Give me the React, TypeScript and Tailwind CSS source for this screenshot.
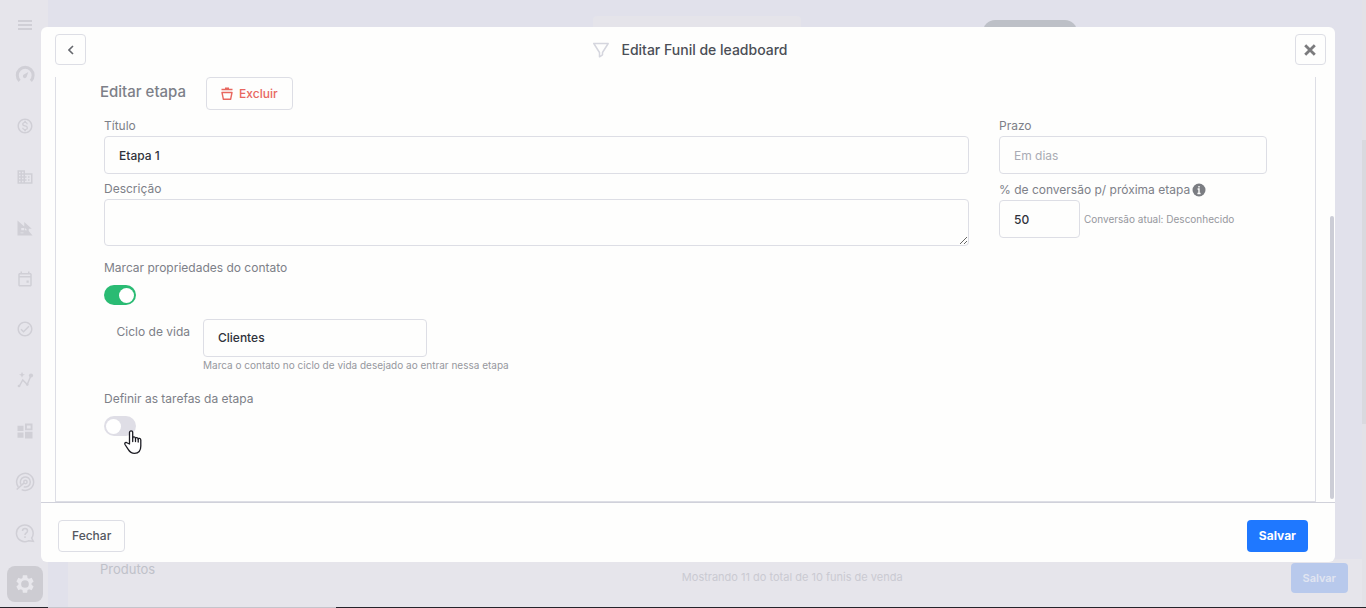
import React, { useState } from 'react';

interface ToggleProps {
    id: string;
    checked: boolean;
    onChange: (value: boolean) => void;
}

const Toggle: React.FC<ToggleProps> = ({ id, checked, onChange }) => (
    <input
        id={id}
        type="checkbox"
        role="switch"
        checked={checked}
        onChange={(e) => onChange(e.target.checked)}
        className="block h-5 w-8 cursor-pointer appearance-none rounded-full bg-[#dfdee6] px-0.5 py-[3px] before:block before:size-[15px] before:rounded-full before:bg-white checked:bg-[#2abb73] checked:before:translate-x-[13px]"
    />
);

const navItems: { name: string; size: string; icon: React.ReactNode }[] = [
    {
        name: 'Painel',
        size: 'size-5',
        icon: (
            <>
                <path d="M5.5 19a9.5 9.5 0 1 1 13.5 0" stroke="currentColor" strokeWidth="3.6" fill="none" />
                <path d="M16 8.5 14 14a2.3 2.3 0 1 1-3.3-2.6z" />
            </>
        ),
    },
    {
        name: 'Vendas',
        size: 'size-[18px]',
        icon: (
            <path d="M12 2C6.48 2 2 6.48 2 12s4.48 10 10 10 10-4.48 10-10S17.52 2 12 2zm0 18c-4.41 0-8-3.59-8-8s3.59-8 8-8 8 3.59 8 8-3.59 8-8 8zm.31-8.86c-1.77-.45-2.34-.94-2.34-1.67 0-.84.79-1.43 2.1-1.43 1.38 0 1.9.66 1.94 1.64h1.71c-.05-1.34-.87-2.57-2.49-2.97V5H10.9v1.69c-1.51.32-2.72 1.3-2.72 2.81 0 1.79 1.49 2.69 3.66 3.21 1.95.46 2.34 1.15 2.34 1.87 0 .53-.39 1.39-2.1 1.39-1.6 0-2.23-.72-2.32-1.64H8.04c.1 1.7 1.36 2.66 2.86 2.97V19h2.34v-1.67c1.52-.29 2.72-1.16 2.73-2.77-.01-2.2-1.9-2.96-3.66-3.42z" />
        ),
    },
    {
        name: 'Empresas',
        size: 'size-[18px]',
        icon: (
            <path d="M12 7V3H2v18h20V7H12zM6 19H4v-2h2v2zm0-4H4v-2h2v2zm0-4H4V9h2v2zm0-4H4V5h2v2zm4 12H8v-2h2v2zm0-4H8v-2h2v2zm0-4H8V9h2v2zm0-4H8V5h2v2zm10 12h-8v-2h2v-2h-2v-2h2v-2h-2V9h8v10zm-2-8h-2v2h2v-2zm0 4h-2v2h2v-2z" />
        ),
    },
    {
        name: 'Funis',
        size: 'size-[18px]',
        icon: <path d="m2 2 9 8V4l10 9h-4v3l5 6H2zM7 12v3h4v-3zM12 12v3h3zM6 18v1h4v-1z" fillRule="evenodd" />,
    },
    {
        name: 'Agenda',
        size: 'size-[18px]',
        icon: (
            <path d="M19 4h-1V2h-2v2H8V2H6v2H5c-1.11 0-2 .9-2 2v14c0 1.1.89 2 2 2h14c1.1 0 2-.9 2-2V6c0-1.1-.9-2-2-2zm0 16H5V10h14v10zm0-12H5V6h14v2zm-5 6h3v3h-3z" />
        ),
    },
    {
        name: 'Tarefas',
        size: 'size-[18px]',
        icon: (
            <path d="M12 2C6.48 2 2 6.48 2 12s4.48 10 10 10 10-4.48 10-10S17.52 2 12 2zm0 18c-4.41 0-8-3.59-8-8s3.59-8 8-8 8 3.59 8 8-3.59 8-8 8zm4.59-12.42L10 14.17l-2.59-2.58L6 13l4 4 8-8z" />
        ),
    },
    {
        name: 'Análises',
        size: 'size-[18px]',
        icon: (
            <>
                <path d="M4 21 9 12l6 6 5-12" stroke="currentColor" strokeWidth="2" fill="none" />
                <circle cx="20" cy="6" r="2.8" />
                <circle cx="4" cy="20" r="1.8" />
                <circle cx="15" cy="18" r="1.8" />
                <path d="m8 1 1.2 3L12 5 9.2 6 8 9 6.8 6 4 5l2.8-1z" />
            </>
        ),
    },
    {
        name: 'Módulos',
        size: 'size-[18px]',
        icon: <path d="M2 5h8v7H2zM12 2h10v9H12zM14.5 4.5v4h5v-4zM2 14h8v7H2zM12 13h10v9H12z" fillRule="evenodd" />,
    },
    {
        name: 'Metas',
        size: 'size-5',
        icon: (
            <g stroke="currentColor" strokeWidth="1.8" fill="none">
                <path d="M4 18a10.2 10.2 0 1 1 4 3.200" />
                <path d="M7.500 15.500a6 6 0 1 1 3 2.200" />
                <path d="m2 21 9-8" />
                <circle cx="12.500" cy="12" r="2" />
            </g>
        ),
    },
    {
        name: 'Ajuda',
        size: 'size-5',
        icon: (
            <g stroke="currentColor" strokeWidth="1.8" fill="none">
                <path d="M20 18a10 10 0 1 0-4 3.4l6 .6z" />
                <path d="M9 9.5c0-4 6-4 6 0 0 2.5-3 2.2-3 5" />
                <path d="M12 16v2" />
            </g>
        ),
    },
];

const Sidebar: React.FC = () => (
    <nav className="flex w-12 shrink-0 flex-col items-center pt-[15px] pb-[5px] text-[#d0cfd6]">
        <button type="button" aria-label="Menu" className="flex h-5 w-full items-center justify-center pl-0.5">
            <svg viewBox="0 0 14 10" className="h-2.5 w-3.5" stroke="currentColor" strokeWidth="2">
                <path d="M0 1h14M0 5h14M0 9h14" />
            </svg>
        </button>
        <ul className="mt-[15px] flex w-full flex-1 flex-col">
            {navItems.map((item) => (
                <li key={item.name} className="flex flex-1 items-center justify-center pl-0.5">
                    <a href="#" aria-label={item.name}>
                        <svg viewBox="0 0 24 24" fill="currentColor" className={item.size}>
                            {item.icon}
                        </svg>
                    </a>
                </li>
            ))}
        </ul>
        <a
            href="#"
            aria-label="Configurações"
            className="mt-2 ml-0.5 flex size-9 items-center justify-center rounded-lg bg-[#cdccd2] text-[#e8e7ec]"
        >
            <svg viewBox="0 0 24 24" fill="currentColor" className="size-[22px]">
                <path d="M19.14 12.94c.04-.3.06-.61.06-.94 0-.32-.02-.64-.07-.94l2.03-1.58a.49.49 0 0 0 .12-.61l-1.92-3.32a.488.488 0 0 0-.59-.22l-2.39.96c-.5-.38-1.03-.7-1.62-.94l-.36-2.54a.484.484 0 0 0-.48-.41h-3.84c-.24 0-.43.17-.47.41l-.36 2.54c-.59.24-1.13.57-1.62.94l-2.39-.96a.488.488 0 0 0-.59.22L2.74 8.87c-.12.21-.08.47.12.61l2.03 1.58c-.05.3-.09.63-.09.94s.02.64.07.94l-2.03 1.58a.49.49 0 0 0-.12.61l1.92 3.32c.12.22.37.29.59.22l2.39-.96c.5.38 1.03.7 1.62.94l.36 2.54c.05.24.24.41.48.41h3.84c.24 0 .44-.17.47-.41l.36-2.54c.59-.24 1.13-.56 1.62-.94l2.39.96c.22.08.47 0 .59-.22l1.92-3.32a.488.488 0 0 0-.12-.61zM12 16.2a4.2 4.2 0 1 1 0-8.4 4.2 4.2 0 0 1 0 8.4z" />
            </svg>
        </a>
    </nav>
);

const Backdrop: React.FC = () => (
    <div className="flex h-screen flex-col overflow-hidden bg-[#e6e5eb]">
        <div className="flex min-h-0 flex-1">
            <Sidebar />
            <div className="flex min-w-0 flex-1 flex-col bg-[#e1e1eb]">
                <div className="flex h-9 items-end">
                    <div className="ml-[545px] h-5 w-[208px] rounded-t bg-[#e5e4ea]" />
                    <div className="ml-[182px] h-4 w-[94px] rounded-t-xl bg-[#bdc0c7]" />
                </div>
                <div className="flex-1" />
                <div className="ml-5 flex items-start bg-[#e6e5eb] pr-3.5 pb-3.5 pl-8 text-[13px] text-[#bfc1c9]">
                    <div className="flex-3 leading-5">Produtos</div>
                    <div className="pt-2 text-[11px] leading-5 text-[#cacad2]">Mostrando 11 do total de 10 funis de venda</div>
                    <div className="flex-2" />
                    <button
                        type="button"
                        className="mt-1 h-[30px] rounded bg-[#b8c9ec] px-3 text-[11px] font-semibold text-[#e1e5f1]"
                    >
                        Salvar
                    </button>
                </div>
            </div>
            <div className="flex w-1 flex-col bg-[#e3e2e7]">
                <div className="mt-[140px] h-[284px] bg-[#d9d9de]" />
            </div>
        </div>
        <div className="flex h-px">
            <div className="w-12 bg-[#25242b]" />
            <div className="w-72 bg-[#c5c4cb]" />
            <div className="flex-1 bg-[#25242b]" />
        </div>
    </div>
);

const inputClass =
    'block h-[38px] rounded border border-[#dddee5] bg-transparent px-3.5 text-[12px] font-medium text-[#2f323b] outline-none placeholder:font-normal placeholder:text-[#a9abb4]';

const App: React.FC = () => {
    const [title, setTitle] = useState('Etapa 1');
    const [description, setDescription] = useState('');
    const [deadline, setDeadline] = useState('');
    const [conversion, setConversion] = useState('50');
    const [lifecycle, setLifecycle] = useState('Clientes');
    const [markContact, setMarkContact] = useState(true);
    const [defineTasks, setDefineTasks] = useState(false);

    return (
        <div className="relative font-['Inter',sans-serif]">
            <Backdrop />

            <div className="absolute inset-0 flex pt-[27px] pr-[31px] pb-[46px] pl-[41px]">
                <div
                    role="dialog"
                    aria-labelledby="modal-title"
                    className="flex min-w-0 flex-1 flex-col rounded-md bg-[#fefefd] text-[12px] text-[#7d8088]"
                >
                    <header className="flex h-[50px] shrink-0 items-center justify-between pr-[9px] pb-[5px] pl-3.5">
                        <button
                            type="button"
                            aria-label="Voltar"
                            className="flex size-[31px] items-center justify-center rounded border border-[#dddee5] text-[#66686e]"
                        >
                            <svg viewBox="0 0 6 10" className="h-2.5 w-1.5" fill="none" stroke="currentColor" strokeWidth="1.6">
                                <path d="M5 1 1 5l4 4" />
                            </svg>
                        </button>
                        <div className="flex items-center gap-3">
                            <svg viewBox="0 0 16 16" className="size-4" fill="none" stroke="#d5d6de" strokeWidth="1.5">
                                <path d="M.8 1.500h14.400l-5.700 9v2.300l-3 2v-4.300z" strokeLinejoin="round" />
                            </svg>
                            <h1 id="modal-title" className="text-[14px] leading-5 font-medium text-[#4b4e56]">
                                Editar Funil de leadboard
                            </h1>
                        </div>
                        <button
                            type="button"
                            aria-label="Fechar janela"
                            className="flex size-[31px] items-center justify-center rounded border border-[#dddee5] text-[#7b7b7d]"
                        >
                            <svg viewBox="0 0 12 12" className="size-3" stroke="currentColor" strokeWidth="2.8">
                                <path d="m1.200 1.200 9.600 9.600M10.800 1.200l-9.600 9.600" />
                            </svg>
                        </button>
                    </header>

                    <div className="flex min-h-0 flex-1 pl-3.5">
                        <div className="min-w-0 flex-1 border-x border-b border-[#dddee5] px-12">
                            <div className="-ml-1 flex h-[33px] items-center gap-5">
                                <h2 className="pb-1 text-[15px] leading-5 font-medium">Editar etapa</h2>
                                <button
                                    type="button"
                                    className="flex h-[33px] items-center gap-1.5 rounded border border-[#dddee5] px-3.5 text-[12px] font-medium text-[#e8675f]"
                                >
                                    <svg
                                        viewBox="0 0 12 13"
                                        className="h-[13px] w-3"
                                        fill="none"
                                        stroke="currentColor"
                                        strokeWidth="1.4"
                                        strokeLinejoin="round"
                                    >
                                        <path d="M.5 2.500h11M4 1.200h4M1 5.500h10l-1.400 6.800H2.400z" />
                                    </svg>
                                    Excluir
                                </button>
                            </div>

                            <div className="mt-1.5 flex gap-[30px]">
                                <div className="min-w-0 flex-1">
                                    <label htmlFor="title" className="block leading-5">
                                        Título
                                    </label>
                                    <input
                                        id="title"
                                        type="text"
                                        value={title}
                                        onChange={(e) => setTitle(e.target.value)}
                                        className={`${inputClass} w-full`}
                                    />
                                    <label htmlFor="description" className="mt-[5px] block leading-5">
                                        Descrição
                                    </label>
                                    <textarea
                                        id="description"
                                        value={description}
                                        onChange={(e) => setDescription(e.target.value)}
                                        className="block h-[47px] w-full resize-y rounded border border-[#dddee5] px-3.5 py-2 font-medium text-[#2f323b] outline-none"
                                    />
                                </div>

                                <div className="w-[268px] shrink-0">
                                    <label htmlFor="deadline" className="block leading-5">
                                        Prazo
                                    </label>
                                    <input
                                        id="deadline"
                                        type="text"
                                        placeholder="Em dias"
                                        value={deadline}
                                        onChange={(e) => setDeadline(e.target.value)}
                                        className={`${inputClass} w-full`}
                                    />
                                    <label htmlFor="conversion" className="mt-1.5 flex items-center gap-0.5 leading-5">
                                        % de conversão p/ próxima etapa
                                        <svg viewBox="0 0 14 14" className="size-3.5">
                                            <circle cx="7" cy="7" r="6.5" fill="#7b7d82" />
                                            <path
                                                d="M7 3v1.600M5.600 6H7v4.500M5.400 10.500h3.200"
                                                stroke="#fefefd"
                                                strokeWidth="1.4"
                                                fill="none"
                                            />
                                        </svg>
                                    </label>
                                    <div className="flex items-center gap-1">
                                        <input
                                            id="conversion"
                                            type="text"
                                            value={conversion}
                                            onChange={(e) => setConversion(e.target.value)}
                                            className={`${inputClass} w-[81px]`}
                                        />
                                        <span className="text-[10px] text-[#96989e]">Conversão atual: Desconhecido</span>
                                    </div>
                                </div>
                            </div>

                            <label htmlFor="mark-contact" className="mt-3 block leading-5">
                                Marcar propriedades do contato
                            </label>
                            <div className="mt-[7px]">
                                <Toggle id="mark-contact" checked={markContact} onChange={setMarkContact} />
                            </div>

                            <div className="mt-3.5 flex items-start">
                                <label htmlFor="lifecycle" className="w-[99px] shrink-0 pt-[3px] pr-[13px] text-right leading-5">
                                    Ciclo de vida
                                </label>
                                <div>
                                    <select
                                        id="lifecycle"
                                        value={lifecycle}
                                        onChange={(e) => setLifecycle(e.target.value)}
                                        className={`${inputClass} w-56 appearance-none`}
                                    >
                                        <option>Clientes</option>
                                    </select>
                                    <p className="text-[10px] leading-4 text-[#96989e]">
                                        Marca o contato no ciclo de vida desejado ao entrar nessa etapa
                                    </p>
                                </div>
                            </div>

                            <label htmlFor="define-tasks" className="mt-4 block leading-5">
                                Definir as tarefas da etapa
                            </label>
                            <div className="relative mt-[7px]">
                                <Toggle id="define-tasks" checked={defineTasks} onChange={setDefineTasks} />
                                {/* Hand pointer resting on the switch */}
                                <svg
                                    viewBox="0 0 18 24"
                                    className="pointer-events-none absolute top-3.5 left-5 h-6 w-[18px]"
                                    fill="#fff"
                                    stroke="#1d1d24"
                                    strokeWidth="1.3"
                                    strokeLinejoin="round"
                                    strokeLinecap="round"
                                >
                                    <path d="M5.500 14V2.500a1.600 1.600 0 0 1 3.200 0V8c0-1.500 2.800-1.500 2.800.5 0-1.500 2.700-1.200 2.700.7 0-1.300 2.600-1.200 2.600.8v6c0 4.500-2.500 7.300-6.300 7.300-3.500 0-4.800-1.500-6.300-4L1 14.500c-.8-1.600 1-2.800 2.300-1.500z" />
                                    <path d="M8.700 8v3.500M11.500 8.500v3M14.200 9.200V12" fill="none" />
                                </svg>
                            </div>
                        </div>
                        <div className="flex w-[19px] flex-col items-end justify-end pb-[3px]">
                            <div className="mr-px h-[67%] w-1 rounded-full bg-[#cccdd6]" />
                        </div>
                    </div>

                    <footer className="flex h-[60px] shrink-0 items-center justify-between border-t border-[#d0d1da] pt-[7px] pr-[27px] pl-[17px]">
                        <button
                            type="button"
                            className="h-8 rounded border border-[#dddee5] px-[13px] text-[12px] font-medium text-[#54575f]"
                        >
                            Fechar
                        </button>
                        <button type="button" className="h-8 rounded bg-[#1f78ff] px-3 text-[12px] font-bold text-white">
                            Salvar
                        </button>
                    </footer>
                </div>
            </div>
        </div>
    );
};

export default App;
